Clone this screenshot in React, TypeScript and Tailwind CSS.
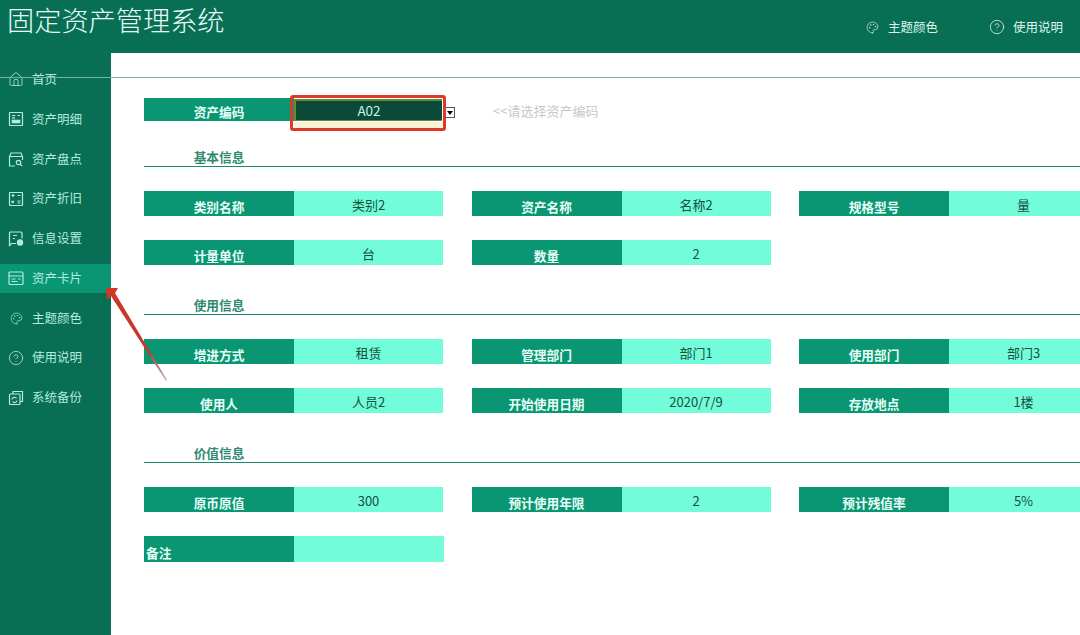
import { CircleHelp, House, Palette } from "lucide-react";
import type { ReactNode } from "react";

const font = { fontFamily: '"Noto Sans CJK SC", "Noto Sans", sans-serif' };

function CardIcon() {
  return (
    <svg viewBox="0 0 16 16" className="h-[16px] w-[16px]" fill="none" stroke="currentColor" strokeWidth="1.2">
      <rect x="1" y="2" width="14" height="12.5" rx="1" />
      <path d="M1 6h14M3.5 9h4M10 9h2.5M3.5 11.5h6" />
    </svg>
  );
}

function ListIcon() {
  return (
    <svg viewBox="0 0 16 16" className="h-[16px] w-[16px]" fill="none" stroke="currentColor" strokeWidth="1.2">
      <rect x="1.5" y="1.5" width="13" height="13" rx="0.5" />
      <path d="M4 4.5h3.5M9.5 4.5h2.5M4 6.8h3" />
      <rect x="4" y="9" width="8" height="3" fill="currentColor" strokeWidth="0.6" />
    </svg>
  );
}

function SearchDocIcon() {
  return (
    <svg viewBox="0 0 16 16" className="h-[17px] w-[17px]" fill="none" stroke="currentColor" strokeWidth="1.2">
      <path d="M7 14.5H1.5V5L3 1.5h10L14.5 5v3.5M1.5 5h13" />
      <circle cx="10.5" cy="11" r="2.2" />
      <path d="M12.2 12.8l2 1.8" />
    </svg>
  );
}

function DepIcon() {
  return (
    <svg viewBox="0 0 16 16" className="h-[16px] w-[16px]" fill="none" stroke="currentColor" strokeWidth="1.2">
      <rect x="1.5" y="1.5" width="13" height="13" rx="0.5" />
      <path d="M9.5 4.5h3M3.5 10l2.5 2M6 10l-2.5 2M9.5 10h3M9.5 12h3M3.5 4.5h3M5 3v3" />
    </svg>
  );
}

function SettingsDocIcon() {
  return (
    <svg viewBox="0 0 16 16" className="h-[17px] w-[17px]" fill="none" stroke="currentColor" strokeWidth="1.2">
      <path d="M8 13H3.5L1.5 15V2.5a1 1 0 0 1 1-1h10.5a1 1 0 0 1 1 1V8" />
      <path d="M5 5h4M5 8h2" />
      <circle cx="12" cy="12" r="2.6" fill="currentColor" />
    </svg>
  );
}

function BackupIcon() {
  return (
    <svg viewBox="0 0 16 16" className="h-[16px] w-[16px]" fill="none" stroke="currentColor" strokeWidth="1.2">
      <path d="M5 4V1.5h9.5v10H12" />
      <rect x="1.5" y="4" width="10.5" height="10.5" rx="1" />
      <path d="M4 9.5a2.5 2.5 0 0 1 4.5-1.2M9 10.5a2.5 2.5 0 0 1-4.5 1" />
    </svg>
  );
}

const menu: { label: string; icon: ReactNode; active?: boolean }[] = [
  { label: "首页", icon: <House size={17} strokeWidth={1.2} /> },
  { label: "资产明细", icon: <ListIcon /> },
  { label: "资产盘点", icon: <SearchDocIcon /> },
  { label: "资产折旧", icon: <DepIcon /> },
  { label: "信息设置", icon: <SettingsDocIcon /> },
  { label: "资产卡片", icon: <CardIcon />, active: true },
  { label: "主题颜色", icon: <Palette size={13} strokeWidth={1.2} /> },
  { label: "使用说明", icon: <CircleHelp size={16} strokeWidth={1.2} /> },
  { label: "系统备份", icon: <BackupIcon /> },
];

function Field({ label, value }: { label: string; value: string }) {
  return (
    <div className="flex h-[25px] w-[300px] shrink-0">
      <div className="flex h-full w-[150px] shrink-0 items-end justify-center bg-[#0b9673] text-[12.7px] leading-[18px] font-bold text-[#e6fff7]">
        {label}
      </div>
      <div className="flex h-full w-[149px] items-center justify-center bg-[#72fcd9] pt-[2px] text-[13px] text-[#14513f]">
        {value}
      </div>
    </div>
  );
}

function Section({ title, className }: { title: string; className: string }) {
  return (
    <div className={`${className} h-[18px] w-[936px] border-b border-[#1d8a6e]`}>
      <div className="w-[150px] text-center text-[12.7px] leading-[16px] font-bold text-[#2f8a72]">{title}</div>
    </div>
  );
}

function Row({ children }: { children: ReactNode }) {
  return <div className="flex gap-[27.5px]">{children}</div>;
}

export default function App() {
  return (
    <div className="relative flex h-[635px] w-[1080px] flex-col overflow-hidden bg-[#086f55]" style={font}>
      <header className="flex h-[53px] shrink-0 items-start justify-between bg-[#086f55] pl-[7px] pr-[17px] text-[#dff7ef]">
        <h1 className="text-[27.2px] leading-[38px] font-light text-[#e9fbf5]">固定资产管理系统</h1>
        <div className="flex items-center pt-[18px] text-[12.5px] leading-[18px]">
          <span className="flex items-center gap-[9px]">
            <Palette size={13} strokeWidth={1.2} />
            主题颜色
          </span>
          <span className="ml-[51px] flex items-center gap-[8px]">
            <CircleHelp size={16} strokeWidth={1.2} />
            使用说明
          </span>
        </div>
      </header>

      <div className="flex min-h-0 flex-1">
        <nav className="flex w-[111px] shrink-0 flex-col gap-[10.75px] pt-[12px] text-[#b4ecdb]">
          {menu.map((item) => (
            <div
              key={item.label}
              className={
                item.active
                  ? "flex h-[29px] items-center gap-[8px] bg-[#0b9673] pl-[8px] text-[12.5px]"
                  : "flex h-[29px] items-center gap-[8px] pl-[8px] text-[12.5px]"
              }
            >
              <span className="flex w-[16px] items-center justify-center">{item.icon}</span>
              <span>{item.label}</span>
            </div>
          ))}
        </nav>

        <main className="min-w-0 flex-1 overflow-hidden bg-white pt-[45px] pl-[33px]">
          <div className="flex h-[23px] items-center">
            <div className="flex h-full w-[150px] items-end justify-center bg-[#0b9673] text-[12.7px] leading-[18px] font-bold text-[#e6fff7]">
              资产编码
            </div>
            <div className="relative flex h-[22px] w-[148px] items-center justify-center border-t-2 border-b border-l-2 border-[#6b8a2e] bg-[#0a4a39] text-[13.5px] text-[#c9f2e4]">
              A02
              <div className="absolute top-[21px] -left-[2px] h-[7px] w-[150px] bg-[#fbf3d9]" />
              <div className="absolute -top-[6px] -left-[6px] h-[36px] w-[156px] rounded-[3px] border-[3px] border-[#dc3a2a]" />
            </div>
            <div className="mt-[6px] ml-[2px] flex h-[11px] w-[11px] items-center justify-center border border-[#555] bg-white">
              <div className="h-0 w-0 border-x-[3px] border-t-[4px] border-x-transparent border-t-black" />
            </div>
            <span className="mt-[2px] ml-[38px] text-[13px] text-[#c8c8c8]">&lt;&lt;请选择资产编码</span>
          </div>

          <Section title="基本信息" className="mt-[28px]" />
          <div className="mt-[24px] flex flex-col gap-[24px]">
            <Row>
              <Field label="类别名称" value="类别2" />
              <Field label="资产名称" value="名称2" />
              <Field label="规格型号" value="量" />
            </Row>
            <Row>
              <Field label="计量单位" value="台" />
              <Field label="数量" value="2" />
            </Row>
          </div>

          <Section title="使用信息" className="mt-[32px]" />
          <div className="mt-[24px] flex flex-col gap-[24px]">
            <Row>
              <Field label="增进方式" value="租赁" />
              <Field label="管理部门" value="部门1" />
              <Field label="使用部门" value="部门3" />
            </Row>
            <Row>
              <Field label="使用人" value="人员2" />
              <Field label="开始使用日期" value="2020/7/9" />
              <Field label="存放地点" value="1楼" />
            </Row>
          </div>

          <Section title="价值信息" className="mt-[32px]" />
          <div className="mt-[24px] flex flex-col gap-[24px]">
            <Row>
              <Field label="原币原值" value="300" />
              <Field label="预计使用年限" value="2" />
              <Field label="预计残值率" value="5%" />
            </Row>
            <div className="flex h-[26px] w-[300px]">
              <div className="flex h-full w-[150px] items-end bg-[#0b9673] pl-[2px] text-[12.7px] leading-[18px] font-bold text-[#e6fff7]">
                备注
              </div>
              <div className="h-full w-[150px] bg-[#72fcd9]" />
            </div>
          </div>
        </main>
      </div>

      {/* thin guide line drawn across sidebar and sheet */}
      <div className="absolute top-[77px] left-0 h-px w-[1080px] bg-[#6fb5a2]" />

      {/* red annotation arrow */}
      <svg className="absolute top-[280px] left-[100px]" width="80" height="110" viewBox="0 0 80 110">
        <defs>
          <linearGradient id="tail" x1="0" y1="0" x2="1" y2="1">
            <stop offset="0" stopColor="#d4352a" />
            <stop offset="0.7" stopColor="#c0392b" />
            <stop offset="1" stopColor="#b9b9b9" />
          </linearGradient>
        </defs>
        <path d="M6 8L18 8L15 13L67 100L66 101L11 16L7 20Z" fill="url(#tail)" />
      </svg>
    </div>
  );
}
